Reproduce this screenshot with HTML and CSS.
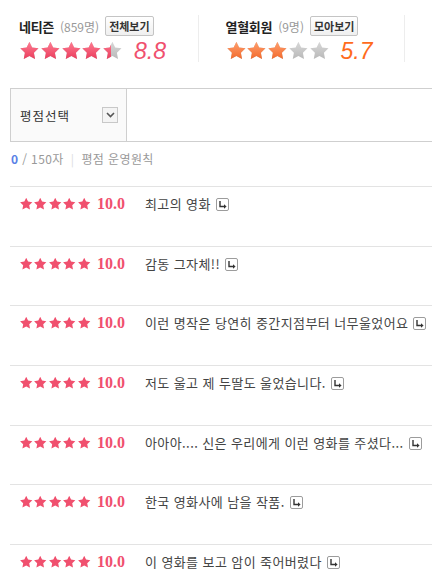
FILE: index.html
```html
<!DOCTYPE html>
<html lang="ko">
<head>
    <meta charset="UTF-8">
    <meta name="viewport" content="width=device-width, initial-scale=1.0">
    <title>평점</title>
    <link rel="stylesheet" href="styles.css">
</head>
<body>
    <svg class="defs" width="0" height="0">
        <defs>
            <linearGradient id="gPink" x1="0" y1="0" x2="0" y2="1">
                <stop offset="0" stop-color="#ff7d92"/>
                <stop offset="1" stop-color="#ea3d5d"/>
            </linearGradient>
            <linearGradient id="gOrange" x1="0" y1="0" x2="0" y2="1">
                <stop offset="0" stop-color="#ffa070"/>
                <stop offset="1" stop-color="#f26a2c"/>
            </linearGradient>
            <linearGradient id="gGrey" x1="0" y1="0" x2="0" y2="1">
                <stop offset="0" stop-color="#d8d8d8"/>
                <stop offset="1" stop-color="#b9b9b9"/>
            </linearGradient>
            <symbol id="star" viewBox="0 0 24 24">
                <path d="M12 1.2l3.2 6.7 7.3 1-5.3 5.1 1.3 7.3L12 17.8l-6.5 3.5 1.3-7.3-5.3-5.1 7.3-1z"/>
            </symbol>
            <symbol id="reply" viewBox="0 0 13 13">
                <rect x="0.5" y="0.5" width="12" height="12" rx="1.5" fill="#fff" stroke="#9c9c9c"/>
                <path d="M4 3v5.5h4.5" fill="none" stroke="#333" stroke-width="1.4"/>
                <path d="M8 6.3l2.6 2.2L8 10.7z" fill="#333"/>
            </symbol>
        </defs>
    </svg>

    <div class="summary">
        <div class="group">
            <div class="group-head">
                <strong class="group-name">네티즌</strong>
                <span class="group-count">(859명)</span>
                <button class="more">전체보기</button>
            </div>
            <div class="group-score">
                <span class="stars-lg">
                    <span class="stars-lg-row grey">
                        <svg><use href="#star"/></svg><svg><use href="#star"/></svg><svg><use href="#star"/></svg><svg><use href="#star"/></svg><svg><use href="#star"/></svg>
                    </span>
                    <span class="stars-lg-fill pink" style="width: 88%">
                        <span class="stars-lg-row">
                            <svg><use href="#star"/></svg><svg><use href="#star"/></svg><svg><use href="#star"/></svg><svg><use href="#star"/></svg><svg><use href="#star"/></svg>
                        </span>
                    </span>
                </span>
                <em class="score score-pink">8.8</em>
            </div>
        </div>
        <div class="group">
            <div class="group-head">
                <strong class="group-name">열혈회원</strong>
                <span class="group-count">(9명)</span>
                <button class="more">모아보기</button>
            </div>
            <div class="group-score">
                <span class="stars-lg">
                    <span class="stars-lg-row grey">
                        <svg><use href="#star"/></svg><svg><use href="#star"/></svg><svg><use href="#star"/></svg><svg><use href="#star"/></svg><svg><use href="#star"/></svg>
                    </span>
                    <span class="stars-lg-fill orange" style="width: 60%">
                        <span class="stars-lg-row">
                            <svg><use href="#star"/></svg><svg><use href="#star"/></svg><svg><use href="#star"/></svg><svg><use href="#star"/></svg><svg><use href="#star"/></svg>
                        </span>
                    </span>
                </span>
                <em class="score score-orange">5.7</em>
            </div>
        </div>
    </div>

    <div class="review-form">
        <div class="select">
            <span>평점선택</span>
            <span class="select-arrow">
                <svg width="9" height="6" viewBox="0 0 9 6"><path d="M1 1l3.5 3.5L8 1" fill="none" stroke="#555" stroke-width="1.6"/></svg>
            </span>
        </div>
        <div class="input"></div>
    </div>

    <div class="counter">
        <span class="count-now">0</span> / 150자<span class="sep">|</span>평점 운영원칙
    </div>

    <ul class="review-list">
        <li class="review">
            <span class="stars-sm"><svg><use href="#star"/></svg><svg><use href="#star"/></svg><svg><use href="#star"/></svg><svg><use href="#star"/></svg><svg><use href="#star"/></svg></span>
            <span class="review-score">10.0</span>
            <span class="review-text">최고의 영화</span>
            <svg class="reply"><use href="#reply"/></svg>
        </li>
        <li class="review">
            <span class="stars-sm"><svg><use href="#star"/></svg><svg><use href="#star"/></svg><svg><use href="#star"/></svg><svg><use href="#star"/></svg><svg><use href="#star"/></svg></span>
            <span class="review-score">10.0</span>
            <span class="review-text">감동 그자체!!</span>
            <svg class="reply"><use href="#reply"/></svg>
        </li>
        <li class="review">
            <span class="stars-sm"><svg><use href="#star"/></svg><svg><use href="#star"/></svg><svg><use href="#star"/></svg><svg><use href="#star"/></svg><svg><use href="#star"/></svg></span>
            <span class="review-score">10.0</span>
            <span class="review-text">이런 명작은 당연히 중간지점부터 너무울었어요</span>
            <svg class="reply"><use href="#reply"/></svg>
        </li>
        <li class="review">
            <span class="stars-sm"><svg><use href="#star"/></svg><svg><use href="#star"/></svg><svg><use href="#star"/></svg><svg><use href="#star"/></svg><svg><use href="#star"/></svg></span>
            <span class="review-score">10.0</span>
            <span class="review-text">저도 울고 제 두딸도 울었습니다.</span>
            <svg class="reply"><use href="#reply"/></svg>
        </li>
        <li class="review">
            <span class="stars-sm"><svg><use href="#star"/></svg><svg><use href="#star"/></svg><svg><use href="#star"/></svg><svg><use href="#star"/></svg><svg><use href="#star"/></svg></span>
            <span class="review-score">10.0</span>
            <span class="review-text">아아아.... 신은 우리에게 이런 영화를 주셨다...</span>
            <svg class="reply"><use href="#reply"/></svg>
        </li>
        <li class="review">
            <span class="stars-sm"><svg><use href="#star"/></svg><svg><use href="#star"/></svg><svg><use href="#star"/></svg><svg><use href="#star"/></svg><svg><use href="#star"/></svg></span>
            <span class="review-score">10.0</span>
            <span class="review-text">한국 영화사에 남을 작품.</span>
            <svg class="reply"><use href="#reply"/></svg>
        </li>
        <li class="review">
            <span class="stars-sm"><svg><use href="#star"/></svg><svg><use href="#star"/></svg><svg><use href="#star"/></svg><svg><use href="#star"/></svg><svg><use href="#star"/></svg></span>
            <span class="review-score">10.0</span>
            <span class="review-text">이 영화를 보고 암이 죽어버렸다</span>
            <svg class="reply"><use href="#reply"/></svg>
        </li>
    </ul>
</body>
</html>
```

FILE: styles.css
```css
* {
    margin: 0;
    padding: 0;
    box-sizing: border-box;
}

body {
    font-family: "Noto Sans CJK KR", "Noto Sans", sans-serif;
    color: #333;
    background-color: #fff;
    overflow: hidden;
}

.defs {
    position: absolute;
    width: 0;
    height: 0;
}

/* Summary of the two rating groups */
.summary {
    display: flex;
    padding: 15px 0 0 19px;
}

.group {
    width: 181px;
    height: 47px;
    margin-right: 27px;
    border-right: 1px solid #ededed;
}

.group-head {
    display: flex;
    align-items: center;
    height: 22px;
}

.group-name {
    font-size: 13px;
    font-weight: bold;
    color: #222;
    letter-spacing: -0.3px;
}

.group-count {
    margin-left: 6px;
    font-size: 12px;
    color: #999;
}

.more {
    margin-left: 6px;
    height: 20px;
    padding: 0 3px;
    font-family: "Noto Sans CJK KR", sans-serif;
    font-size: 11px;
    font-weight: bold;
    color: #333;
    border: 1px solid #c4c4c4;
    border-radius: 2px;
    background: linear-gradient(#fff, #efefef);
    line-height: 18px;
}

.group-score {
    display: flex;
    align-items: center;
    margin-top: 3px;
}

.stars-lg {
    position: relative;
    display: inline-block;
    width: 104px;
    height: 22px;
}

.stars-lg-row {
    display: flex;
    width: 104px;
}

.stars-lg-row svg {
    width: 20.8px;
    height: 22px;
    flex-shrink: 0;
}

.stars-lg-fill {
    position: absolute;
    top: 0;
    left: 0;
    height: 22px;
    overflow: hidden;
}

.grey { fill: url(#gGrey); }
.pink { fill: url(#gPink); }
.orange { fill: url(#gOrange); }

.score {
    margin-left: 11px;
    font-family: "Liberation Sans", Arial, sans-serif;
    font-size: 23px;
    font-style: italic;
    line-height: 22px;
}

.score-pink { color: #f0506e; }
.score-orange { color: #ff6b1c; }

/* Write form */
.review-form {
    display: flex;
    height: 54px;
    margin: 26px 0 0 10px;
    border: 1px solid #cfcfcf;
    border-right: none;
}

.select {
    display: flex;
    align-items: center;
    justify-content: space-between;
    width: 116px;
    padding: 0 8px 0 9px;
    background-color: #fafafa;
    border-right: 1px solid #cfcfcf;
    font-size: 12.5px;
    letter-spacing: 1px;
    color: #333;
}

.select-arrow {
    display: flex;
    align-items: center;
    justify-content: center;
    width: 16px;
    height: 16px;
    border: 1px solid #c8c8c8;
    background-color: #f4f4f4;
}

.input {
    flex: 1;
    background-color: #fff;
}

.counter {
    margin: 10px 0 0 11px;
    font-size: 12px;
    letter-spacing: 0.4px;
    line-height: 14px;
    color: #999;
}

.count-now {
    color: #5a7fe6;
    font-weight: bold;
}

.sep {
    margin: 0 7px;
    color: #ddd;
}

/* Review list */
.review-list {
    list-style: none;
    margin: 20px 0 0 10px;
}

.review {
    display: flex;
    align-items: flex-start;
    height: 59.7px;
    padding: 9px 0 0 9px;
    border-top: 1px solid #e3e3e3;
}

.stars-sm {
    display: flex;
    width: 72px;
    height: 16px;
    align-items: center;
    fill: #f0506e;
}

.stars-sm svg {
    width: 14.4px;
    height: 14px;
    flex-shrink: 0;
}

.review-score {
    width: 48px;
    margin-left: 6px;
    font-family: "Liberation Serif", "Times New Roman", serif;
    font-size: 16px;
    font-weight: bold;
    color: #f0506e;
    line-height: 16px;
}

.review-text {
    font-size: 13px;
    letter-spacing: 0.4px;
    line-height: 16px;
    color: #444;
    white-space: nowrap;
}

.reply {
    width: 13px;
    height: 13px;
    margin: 2px 0 0 5px;
    flex-shrink: 0;
}
```
